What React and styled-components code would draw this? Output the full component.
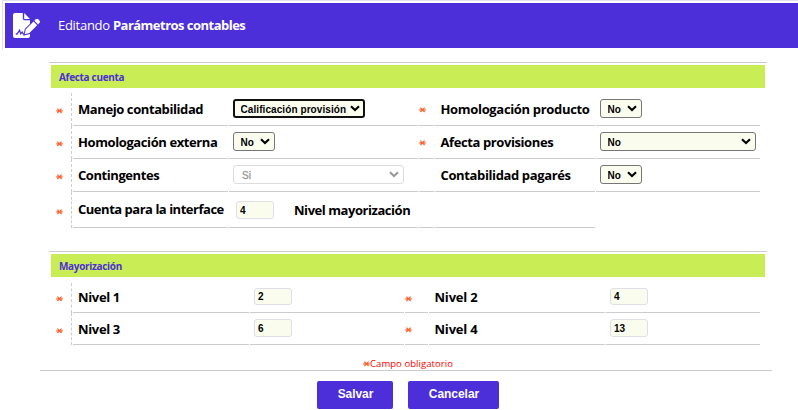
import React from "react";
import styled, { createGlobalStyle, css } from "styled-components";

const Global = createGlobalStyle`
  * { box-sizing: border-box; }
  body { margin: 0; background: #fff; overflow: hidden; }
`;

const purple = "#4c2fd8";
const ui = '"Open Sans", "Noto Sans", sans-serif';
const arial = '"Liberation Sans", Arial, sans-serif';

const Page = styled.main`
  width: 798px;
  height: 410px;
  overflow: hidden;
  background: #fff;
  font-family: ${ui};
`;
const Frame = styled.div`
  height: 50px;
  margin-left: 2px;
  border-top: 1px solid #dfdfe8;
  border-left: 1px solid #dfdfe8;
  padding: 2px 0 0 2px;
`;
const Header = styled.header`
  display: flex;
  align-items: center;
  height: 45px;
  padding-left: 7px;
  background: ${purple};
  color: #fff;
`;
const Title = styled.h1`
  margin: 0 0 1px 17px;
  font-size: 13px;
  line-height: 18px;
  font-weight: 400;
  white-space: nowrap;
  letter-spacing: -0.28px;
  b { font-weight: 700; letter-spacing: -0.52px; }
`;
const Section = styled.section`
  width: 718px;
  margin: ${(p) => p.$top}px 0 0 49px;
  border-top: 1px solid #ccc;
  padding: 2px 2px 0;
`;
const Heading = styled.h2`
  margin: 0 0 ${(p) => p.$gap}px;
  height: 23px;
  padding-left: 8px;
  background: #c9ed55;
  color: ${purple};
  font-size: 10px;
  font-weight: 700;
  line-height: 25px;
  letter-spacing: -0.32px;
`;
const Row = styled.div`
  display: grid;
  grid-template-columns: ${(p) => p.$cols};
  column-gap: 1px;
  height: ${(p) => p.$h}px;
`;
const Cell = styled.div`
  display: flex;
  align-items: flex-start;
  padding: ${(p) => p.$top || 0}px 0 0 ${(p) => p.$left || 0}px;
  border-bottom: ${(p) => (p.$plain ? "0" : "1px solid #ccc")};
  min-width: 0;
`;
const MarkCell = styled(Cell)`
  border-bottom: 0;
  border-right: 1px dashed #ccc;
`;
const Label = styled.label`
  font-size: 13px;
  font-weight: 700;
  line-height: 18px;
  color: #000;
  white-space: nowrap;
  letter-spacing: ${(p) => p.$ls}px;
`;
const SelectBox = styled.div`
  display: grid;
  align-items: center;
  width: ${(p) => p.$w}px;
  height: 19px;
  > * { grid-area: 1 / 1; }
  > svg { justify-self: end; margin-right: 5px; pointer-events: none; }
`;
const Select = styled.select`
  appearance: none;
  width: 100%;
  height: 19px;
  margin: 0;
  padding: 1px 0 0 6.5px;
  border: 1px solid #767676;
  border-radius: 3px;
  outline: 0;
  background: #fafcee;
  color: #000;
  opacity: 1;
  font: 700 10px ${arial};
  letter-spacing: 0.08px;
  ${(p) => p.$strong && css`border: 2px solid #101010; padding-left: 5.5px;`}
  &:disabled {
    padding-left: 8px;
    background: #fff;
    color: #999;
    border-color: #ddd;
    font-weight: 400;
    -webkit-text-stroke: 0.3px #999;
  }
`;
const Input = styled.input`
  width: 38px;
  height: ${(p) => p.$h || 18}px;
  padding: 0 0 0 3px;
  border: 1px solid #dfdfe8;
  border-radius: 3px;
  background: #fafcee;
  color: #000;
  font: 700 10px ${arial};
`;
const Footer = styled.footer`
  width: 732px;
  margin: 12px 0 0 40px;
`;
const Note = styled.p`
  display: flex;
  align-items: center;
  height: 14px;
  margin: 0;
  padding-left: 323px;
  border-bottom: 1px solid #ccc;
  color: #f00;
  font-size: 9.5px;
  line-height: 13px;
  white-space: nowrap;
  letter-spacing: 0.06px;
`;
const Buttons = styled.div`
  display: flex;
  gap: 15px;
  padding: 10px 0 0 277px;
`;
const Button = styled.button`
  width: ${(p) => p.$w}px;
  height: 28px;
  padding: 0 0 3px 1px;
  border: 0;
  border-radius: 2px;
  background: ${purple};
  color: #fff;
  font: 700 12px ${arial};
  letter-spacing: -0.05px;
`;

const Star = () => (
  <svg width="7" height="6" viewBox="0 0 7 6" fill="none" stroke="#f63" strokeWidth="1.3">
    <path d="M0.2 2.8H6.8M1.4 .6L5.6 5M5.6 .6L1.4 5" />
  </svg>
);
const Chevron = ({ color = "#000" }) => (
  <svg width="10" height="7" viewBox="0 0 10 7" fill="none" stroke={color} strokeWidth="2.1">
    <path d="M1 1.2L5 5L9 1.2" />
  </svg>
);
const SignIcon = () => (
  <svg width="29" height="27" viewBox="0 0 29 27">
    <path fill="#fff" d="M3 1H10.8V6.5Q10.8 8.2 12.5 8.2H18V24Q18 26 16 26H3Q1 26 1 24V3Q1 1 3 1Z" />
    <path fill="#fff" d="M12.2 1L18 6.9H12.2Z" />
    <path fill="none" stroke={purple} strokeWidth="1.3" d="M3.8 22H5L7.6 18.2L8.6 21.8L10.2 20L11.3 22H14" />
    <path fill="#fff" stroke={purple} strokeWidth="2" paintOrder="stroke" d="M13.7 17.4L21.5 9.6L25.2 13.3L17.4 21.1L12.7 22.3Z" />
    <path fill="#fff" d="M22.4 8.7L24 7.2Q25 6.3 26 7.2L27.6 8.8Q28.5 9.8 27.6 10.8L26.1 12.4Z" />
  </svg>
);

const Choice = ({ w, text, strong, disabled }) => (
  <SelectBox $w={w}>
    <Select $strong={strong} disabled={disabled} defaultValue={text}>
      <option>{text}</option>
    </Select>
    <Chevron color={disabled ? "#999" : "#000"} />
  </SelectBox>
);

const top = "21px 155px 189px 15px 160px 164px";
const bottom = "21px 176px 154px 23px 176px 154px";

const AccountRow = ({ h = 33, starTop = 15, labelTop = 7, inset = 6, left, ls, control, rightStar, right, rls, rightControl }) => (
  <Row $cols={top} $h={h}>
    <MarkCell $left={5} $top={starTop}><Star /></MarkCell>
    <Cell $left={5} $top={labelTop}><Label $ls={ls}>{left}</Label></Cell>
    <Cell $left={4} $top={inset}>{control}</Cell>
    <Cell $top={14}>{rightStar && <Star />}</Cell>
    <Cell $left={5.5} $top={labelTop}><Label $ls={rls}>{right}</Label></Cell>
    <Cell $left={4} $top={inset} $plain={!rightControl}>{rightControl}</Cell>
  </Row>
);

const LevelRow = ({ h, starTop, rightStarTop, labelTop, inset, inputH, names, values }) => (
  <Row $cols={bottom} $h={h}>
    <MarkCell $left={5} $top={starTop}><Star /></MarkCell>
    <Cell $left={5} $top={labelTop}><Label $ls={-0.35}>{names[0]}</Label></Cell>
    <Cell $left={4} $top={inset}><Input $h={inputH} defaultValue={values[0]} /></Cell>
    <Cell $top={rightStarTop}><Star /></Cell>
    <Cell $left={5.5} $top={labelTop}><Label $ls={-0.2}>{names[1]}</Label></Cell>
    <Cell $left={4} $top={inset}><Input $h={inputH} defaultValue={values[1]} /></Cell>
  </Row>
);

const Split = styled.div`
  display: flex;
  padding-left: 3px;
  gap: 20px;
`;

export default function App() {
  return (
    <Page>
      <Global />
      <Frame>
        <Header>
          <SignIcon />
          <Title>Editando <b>Parámetros contables</b></Title>
        </Header>
      </Frame>

      <Section $top={12}>
        <Heading $gap={5}>Afecta cuenta</Heading>
        <AccountRow
          left="Manejo contabilidad" ls={-0.41}
          control={<Choice w={132} text="Calificación provisión" strong />}
          rightStar right="Homologación producto" rls={-0.33}
          rightControl={<Choice w={42} text="No" />}
        />
        <AccountRow
          left="Homologación externa" ls={-0.4}
          control={<Choice w={42} text="No" />}
          rightStar right="Afecta provisiones" rls={-0.4}
          rightControl={<Choice w={156} text="No" />}
        />
        <AccountRow
          left="Contingentes" ls={-0.43}
          control={<Choice w={171} text="Si" disabled />}
          right="Contabilidad pagarés" rls={-0.37}
          rightControl={<Choice w={42} text="No" />}
        />
        <AccountRow
          h={36} starTop={17} labelTop={8} inset={9}
          left="Cuenta para la interface" ls={-0.48}
          control={<Split><Input defaultValue="4" /><Label $ls={-0.45}>Nivel mayorización</Label></Split>}
        />
      </Section>

      <Section $top={23}>
        <Heading $gap={6}>Mayorización</Heading>
        <LevelRow h={30} starTop={13} rightStarTop={13} labelTop={5} inset={5} inputH={17} names={["Nivel 1", "Nivel 2"]} values={["2", "4"]} />
        <LevelRow h={32} starTop={15} rightStarTop={14} labelTop={7} inset={6} inputH={18} names={["Nivel 3", "Nivel 4"]} values={["6", "13"]} />
      </Section>

      <Footer>
        <Note><Star />Campo obligatorio</Note>
        <Buttons>
          <Button $w={76}>Salvar</Button>
          <Button $w={91}>Cancelar</Button>
        </Buttons>
      </Footer>
    </Page>
  );
}
